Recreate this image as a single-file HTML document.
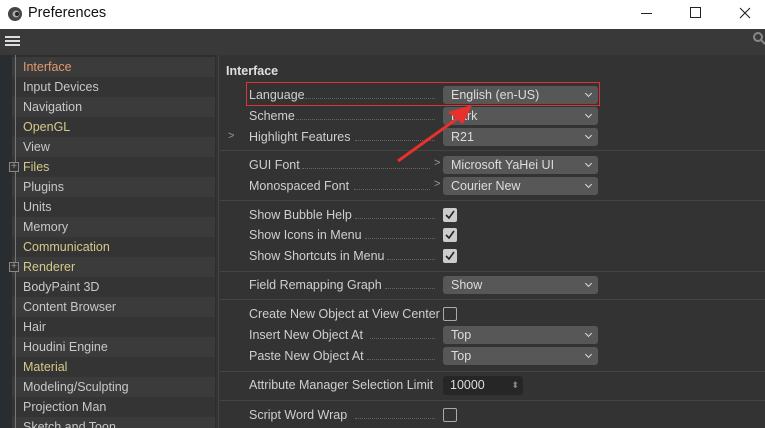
<!DOCTYPE html>
<html><head><style>
*{margin:0;padding:0;box-sizing:border-box}
html,body{width:765px;height:428px;overflow:hidden}
body{background:#333;font-family:"Liberation Sans",sans-serif;position:relative}
.title{position:absolute;left:0;top:0;width:765px;height:29px;background:#fff;color:#111;font-size:14.5px}
.tb{position:absolute;left:0;top:29px;width:765px;height:26px;background:#393939}
.side{position:absolute;left:0;top:55px;width:216px;height:373px;background:#2e2e2e;overflow:hidden}
.strip{position:absolute;left:0;top:0;width:12px;height:373px;background:#2a2d30}
.row{position:absolute;left:12px;width:203px;height:20px;font-size:12.5px;color:#c8c8c8;line-height:20px;padding-left:11px}
.row.a{background:#3b3b3b}.row.b{background:#343434}
.y{color:#d6c98a}.o{color:#e39a6c}
.tree{position:absolute;left:15px;top:0;width:1px;height:373px;background:#777}
.main{position:absolute;left:218px;top:55px;width:547px;height:373px;background:#333;border-left:1px solid #444}
.l{position:absolute;left:249px;font-size:12.5px;color:#cfcfcf;height:18px;line-height:18px}
.dots{position:absolute;border-bottom:1px dotted #666;height:1px}
.dd{position:absolute;left:443px;width:155px;height:18px;background:#575757;border-radius:3px;color:#ddd;font-size:12.5px;line-height:18px;padding-left:8px}
.dd:after{content:"";position:absolute;right:7px;top:5px;width:4px;height:4px;border-right:1.5px solid #ddd;border-bottom:1.5px solid #ddd;transform:rotate(45deg)}
.cb{position:absolute;left:443px;width:14px;height:14px;background:#ccc;border-radius:2px}
.cb.e{background:none;border:1px solid #aaa}
.sep{position:absolute;left:220px;width:545px;height:1px;background:#444}
.chev{position:absolute;color:#999;font-size:11px}
</style></head><body>
<div class="title">
<svg style="position:absolute;left:7px;top:6px" width="16" height="16"><circle cx="8" cy="8" r="7" fill="#444"/><circle cx="9" cy="8" r="3.5" fill="#aaa"/><circle cx="10" cy="8" r="2" fill="#222"/></svg>
<span style="position:absolute;left:28px;top:5px">Preferences</span>
<div style="position:absolute;left:641px;top:13px;width:11px;height:1px;background:#222"></div>
<div style="position:absolute;left:690px;top:7px;width:11px;height:11px;border:1px solid #222"></div>
<svg style="position:absolute;left:739px;top:7px" width="12" height="12"><path d="M1 1L11 11M11 1L1 11" stroke="#222" stroke-width="1.1"/></svg>
</div>
<div class="tb">
<div style="position:absolute;left:5px;top:7px;width:15px;height:2px;background:#ddd;box-shadow:0 4px 0 #ddd,0 8px 0 #ddd"></div>
<svg style="position:absolute;left:752px;top:3px" width="13" height="13"><circle cx="6" cy="5" r="4" stroke="#888" stroke-width="2" fill="none"/><path d="M9 8L13 12" stroke="#888" stroke-width="2"/></svg>
</div>
<div class="side"><div class="strip"></div>
<div class="row a o" style="top:2px">Interface</div>
<div class="row b" style="top:22px">Input Devices</div>
<div class="row a" style="top:42px">Navigation</div>
<div class="row b y" style="top:62px">OpenGL</div>
<div class="row a" style="top:82px">View</div>
<div class="row b y" style="top:102px">Files</div>
<div class="row a" style="top:122px">Plugins</div>
<div class="row b" style="top:142px">Units</div>
<div class="row a" style="top:162px">Memory</div>
<div class="row b y" style="top:182px">Communication</div>
<div class="row a y" style="top:202px">Renderer</div>
<div class="row b" style="top:222px">BodyPaint 3D</div>
<div class="row a" style="top:242px">Content Browser</div>
<div class="row b" style="top:262px">Hair</div>
<div class="row a" style="top:282px">Houdini Engine</div>
<div class="row b y" style="top:302px">Material</div>
<div class="row a" style="top:322px">Modeling/Sculpting</div>
<div class="row b" style="top:342px">Projection Man</div>
<div class="row a" style="top:362px">Sketch and Toon</div>
<div class="tree"></div>
<div style="position:absolute;left:9px;top:107px;width:10px;height:10px;border:1px solid #888;background:#333;color:#999;font-size:10px;line-height:8px;text-align:center">+</div>
<div style="position:absolute;left:9px;top:207px;width:10px;height:10px;border:1px solid #888;background:#333;color:#999;font-size:10px;line-height:8px;text-align:center">+</div>
</div>
<div class="main"></div>
<div style="position:absolute;left:226px;top:64px;font-size:12.5px;font-weight:bold;color:#e0e0e0">Interface</div>

<div class="l" style="top:86px">Language</div><div class="dots" style="left:305px;width:130px;top:98px"></div><div class="dd" style="top:86px">English (en-US)</div>
<div class="l" style="top:107px">Scheme</div><div class="dots" style="left:296px;width:139px;top:119px"></div><div class="dd" style="top:107px">Dark</div>
<div class="chev" style="left:228px;top:130px">&gt;</div>
<div class="l" style="top:128px">Highlight Features</div><div class="dots" style="left:355px;width:80px;top:140px"></div><div class="dd" style="top:128px">R21</div>
<div class="sep" style="top:150px"></div>
<div class="l" style="top:156px">GUI Font</div><div class="dots" style="left:302px;width:128px;top:168px"></div><div class="chev" style="left:434px;top:157px">&gt;</div><div class="dd" style="top:156px">Microsoft YaHei UI</div>
<div class="l" style="top:177px">Monospaced Font</div><div class="dots" style="left:354px;width:76px;top:189px"></div><div class="chev" style="left:434px;top:178px">&gt;</div><div class="dd" style="top:177px">Courier New</div>
<div class="sep" style="top:200px"></div>
<div class="l" style="top:206px">Show Bubble Help</div><div class="dots" style="left:355px;width:80px;top:218px"></div>
<div class="l" style="top:226px">Show Icons in Menu</div><div class="dots" style="left:365px;width:70px;top:238px"></div>
<div class="l" style="top:247px">Show Shortcuts in Menu</div><div class="dots" style="left:387px;width:48px;top:259px"></div>
<div class="cb" style="top:208px"></div><div class="cb" style="top:228px"></div><div class="cb" style="top:249px"></div>
<svg style="position:absolute;left:443px;top:208px" width="14" height="60"><path d="M3 7L6 10L11 3M3 27L6 30L11 23M3 48L6 51L11 44" stroke="#222" stroke-width="1.6" fill="none"/></svg>
<div class="sep" style="top:271px"></div>
<div class="l" style="top:276px">Field Remapping Graph</div><div class="dots" style="left:385px;width:50px;top:288px"></div><div class="dd" style="top:276px">Show</div>
<div class="sep" style="top:299px"></div>
<div class="l" style="top:305px">Create New Object at View Center</div><div class="cb e" style="top:307px"></div>
<div class="l" style="top:326px">Insert New Object At</div><div class="dots" style="left:370px;width:65px;top:338px"></div><div class="dd" style="top:326px">Top</div>
<div class="l" style="top:347px">Paste New Object At</div><div class="dots" style="left:367px;width:68px;top:359px"></div><div class="dd" style="top:347px">Top</div>
<div class="sep" style="top:371px"></div>
<div class="l" style="top:376px">Attribute Manager Selection Limit</div>
<div style="position:absolute;left:443px;top:376px;width:80px;height:19px;background:#262626;border-radius:3px;color:#ddd;font-size:12.5px;line-height:19px;padding-left:7px">10000<span style="position:absolute;right:4px;top:0;font-size:9px;color:#888">⬍</span></div>
<div class="sep" style="top:400px"></div>
<div class="l" style="top:406px">Script Word Wrap</div><div class="dots" style="left:355px;width:80px;top:418px"></div><div class="cb e" style="top:408px"></div>

<div style="position:absolute;left:246px;top:82px;width:354px;height:24px;border:1.5px solid #d33"></div>
<svg style="position:absolute;left:0;top:0" width="765" height="428"><path d="M398 161L458 118" stroke="#e8302c" stroke-width="3"/><path d="M472 105L448 112L463 124Z" fill="#e8302c"/></svg>
</body></html>
